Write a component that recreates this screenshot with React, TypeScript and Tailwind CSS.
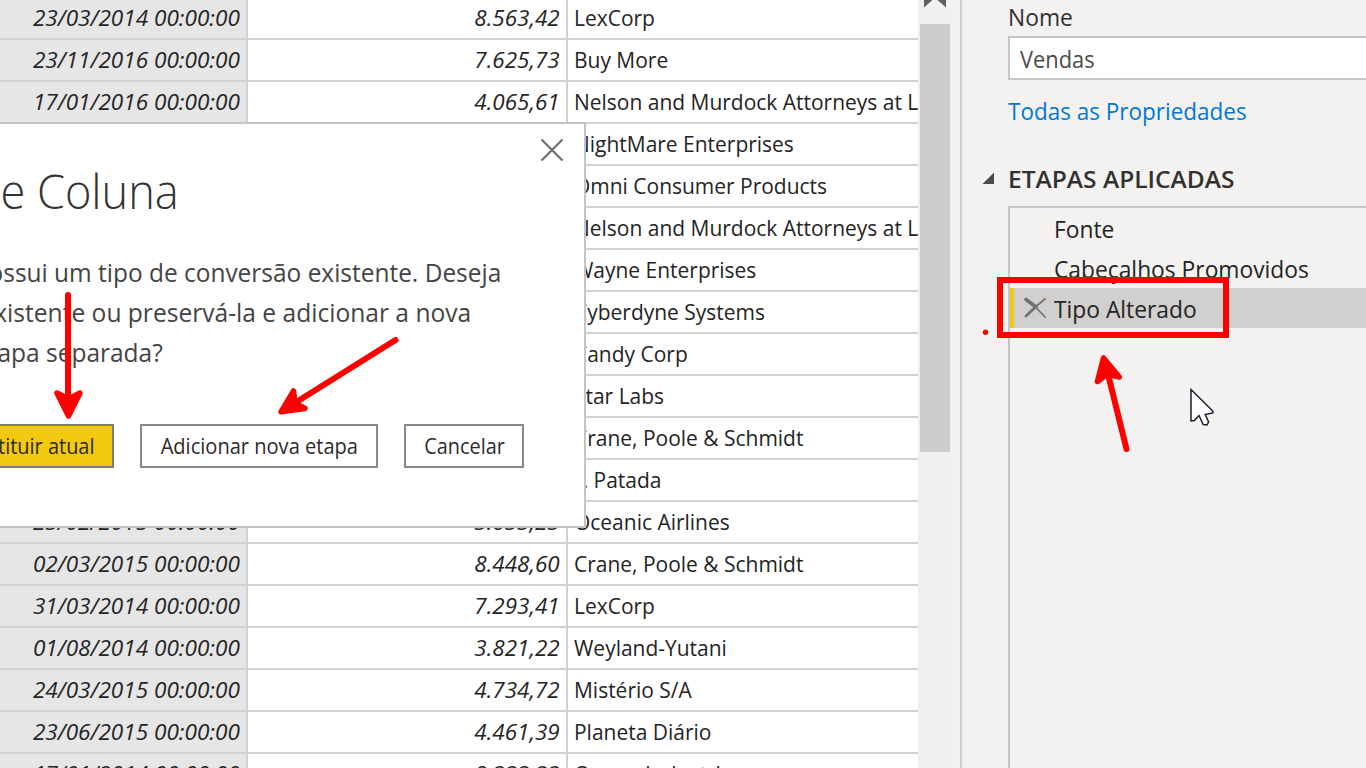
type Row = { date: string; value: string; client: string; nudge?: boolean };

const rows: Row[] = [
  { date: '23/03/2014 00:00:00', value: '8.563,42', client: 'LexCorp' },
  { date: '23/11/2016 00:00:00', value: '7.625,73', client: 'Buy More' },
  { date: '17/01/2016 00:00:00', value: '4.065,61', client: 'Nelson and Murdock Attorneys at L' },
  { date: '', value: '', client: 'NightMare Enterprises' },
  { date: '', value: '', client: 'Omni Consumer Products' },
  { date: '', value: '', client: 'Nelson and Murdock Attorneys at L' },
  { date: '', value: '', client: 'Wayne Enterprises' },
  { date: '', value: '', client: 'Cyberdyne Systems' },
  { date: '', value: '', client: 'Candy Corp' },
  { date: '', value: '', client: 'Star Labs' },
  { date: '', value: '', client: 'Crane, Poole & Schmidt' },
  { date: '', value: '', client: 'J. Patada', nudge: true },
  { date: '23/02/2015 00:00:00', value: '3.633,23', client: 'Oceanic Airlines' },
  { date: '02/03/2015 00:00:00', value: '8.448,60', client: 'Crane, Poole & Schmidt' },
  { date: '31/03/2014 00:00:00', value: '7.293,41', client: 'LexCorp' },
  { date: '01/08/2014 00:00:00', value: '3.821,22', client: 'Weyland-Yutani' },
  { date: '24/03/2015 00:00:00', value: '4.734,72', client: 'Mistério S/A' },
  { date: '23/06/2015 00:00:00', value: '4.461,39', client: 'Planeta Diário' },
  { date: '17/01/2014 00:00:00', value: '8.333,33', client: 'Queen Industries' },
];

function Grid() {
  return (
    <div className="-mt-0.5 w-[918px] shrink-0 overflow-hidden bg-white text-[22px] leading-[38px] text-[#242424]">
      {rows.map((r, i) => (
        <div key={i} className="flex h-[42px] whitespace-nowrap border-b-2 border-[#d2d2d2]">
          <div className="flex w-[248px] justify-end border-r-2 border-[#d2d2d2] bg-[#e6e6e6] pr-[6px] italic">
            <span className="origin-right scale-x-[1.025]">{r.date}</span>
          </div>
          <div className="flex w-[320px] justify-end border-r-2 border-[#d2d2d2] pr-[6px] italic">
            <span className="origin-right scale-x-[1.02]">{r.value}</span>
          </div>
          <div className={r.nudge ? 'flex min-w-0 flex-1 pl-[9px]' : 'flex min-w-0 flex-1 pl-[6px]'}>
            <span className="origin-left scale-x-[0.953]">{r.client}</span>
          </div>
        </div>
      ))}
    </div>
  );
}

function Scrollbar() {
  return (
    <div className="w-[33px] shrink-0 bg-[#f0f0f0]">
      <svg className="block" width="33" height="24" viewBox="918 0 33 24">
        <path d="M924 7.5V0H932.5L924 7.5ZM946 7.5V0H937.5L946 7.5Z" fill="#606060" />
      </svg>
      <div className="ml-0.5 h-[428px] w-[30px] bg-[#cdcdcd]" />
    </div>
  );
}

function Step({ label, selected }: { label: string; selected?: boolean }) {
  return (
    <div
      className={
        selected
          ? 'flex h-10 items-center border-l-4 border-[#f2c811] bg-[#d2d0ce] pl-2.5'
          : 'flex h-10 items-center pl-3.5'
      }
    >
      <span className="flex w-[30px] shrink-0">
        {selected && (
          <svg width="23" height="22" viewBox="0 0 23 22" fill="none" stroke="#737271" strokeLinecap="round">
            <path d="M2 2.5L12 10" strokeWidth="3.6" />
            <path d="M11 9.5L21 20" strokeWidth="1.8" />
            <path d="M21 2L10 11" strokeWidth="1.8" />
            <path d="M11 10.5L2 19" strokeWidth="2.8" />
          </svg>
        )}
      </span>
      <span className="origin-left scale-x-[0.95] whitespace-nowrap pt-0.5 text-[24px] text-[#252423]">{label}</span>
    </div>
  );
}

function SettingsPanel() {
  return (
    <aside className="flex min-w-0 flex-1 flex-col overflow-hidden border-l-2 border-[#d0cfce] pl-5 text-[24px] text-[#323130]">
      <div className="h-9 pl-[26px] leading-[34px]">
        <span className="inline-block origin-left scale-x-[0.95]">Nome</span>
      </div>
      <div className="ml-[26px] h-11 border-2 border-r-0 border-[#c8c6c4] bg-white pl-[10px] leading-[41px] text-[#4c4a48]">
        <span className="inline-block origin-left scale-x-[0.91]">Vendas</span>
      </div>
      <a className="ml-[26px] mt-[11px] block h-10 whitespace-nowrap leading-[40px] text-[#0078d4]">
        <span className="inline-block origin-left scale-x-[0.937]">Todas as Propriedades</span>
      </a>
      <div className="mt-[28px] flex h-10 items-center">
        <svg className="mr-[13px] shrink-0" width="13" height="12" viewBox="0 0 13 12">
          <path d="M0.5 11L12 -0.5V11Z" fill="#4a4a4a" />
        </svg>
        <h2 className="origin-left scale-x-[1.022] whitespace-nowrap font-semibold">ETAPAS APLICADAS</h2>
      </div>
      <div className="ml-[26px] mt-[7px] flex-1 border-l-2 border-t-2 border-[#c8c6c4]">
        <Step label="Fonte" />
        <Step label="Cabeçalhos Promovidos" />
        <Step label="Tipo Alterado" selected />
      </div>
    </aside>
  );
}

function Dialog() {
  return (
    <div className="absolute left-0 top-[122px] flex h-[406px] w-[586px] flex-col overflow-hidden border-y-2 border-r-2 border-[#c4c4c4] bg-white">
      <svg className="absolute left-[540px] top-[13px]" width="24" height="26" viewBox="0 0 24 26">
        <path d="M1.5 2.5L22.5 23.5M22.5 2.5L1.5 23.5" stroke="#6f6f6f" strokeWidth="2.2" fill="none" />
      </svg>
      <h1 className="mt-[37px] flex h-[60px] w-[179px] justify-end whitespace-nowrap text-[48px] font-light leading-[60px] text-[#333]">
        <span className="origin-right scale-x-[0.94]">e Coluna</span>
      </h1>
      <div className="mt-[31px] text-[25px] leading-[40px] text-[#444]">
        <p className="flex w-[501px] justify-end whitespace-nowrap">
          <span className="origin-right scale-x-[0.978]">ossui um tipo de conversão existente. Deseja</span>
        </p>
        <p className="flex w-[471px] justify-end whitespace-nowrap">
          <span className="origin-right scale-x-[0.983]">xistente ou preservá-la e adicionar a nova</span>
        </p>
        <p className="flex w-[163px] justify-end whitespace-nowrap">
          <span className="origin-right scale-x-[0.98]">apa separada?</span>
        </p>
      </div>
      <div className="mt-[52px] flex h-11 whitespace-nowrap text-[21px] leading-[41px] text-[#2b2b2b]">
        <button className="flex w-[114px] justify-end border-2 border-l-0 border-[#7d7b79] bg-[#f2c811] pr-[18px]">
          <span className="origin-right scale-x-[0.95]">tituir atual</span>
        </button>
        <button className="ml-[26px] flex w-[238px] justify-center border-2 border-[#8a8886]">
          <span className="scale-x-[0.955]">Adicionar nova etapa</span>
        </button>
        <button className="ml-[26px] flex w-[120px] justify-center border-2 border-[#8a8886] pl-px">
          <span className="scale-x-[0.945]">Cancelar</span>
        </button>
      </div>
    </div>
  );
}

function Annotations() {
  return (
    <svg className="pointer-events-none absolute inset-0" width="1366" height="768" viewBox="0 0 1366 768">
      <g stroke="#ff0000" strokeWidth="6" strokeLinecap="round" strokeLinejoin="round" fill="none">
        <path d="M68 295V405" />
        <path d="M68.5 416L57 393L68.5 399L80 393Z" fill="#ff0000" strokeWidth="5.5" />
        <path d="M395.5 340L290 406" />
        <path d="M281 411.8L293.5 391L295 403L305 408.5Z" fill="#ff0000" strokeWidth="5.5" />
        <path d="M1126.5 449L1107 370" />
        <path d="M1103.5 358L1097.5 381.5L1107 374L1119.3 377Z" fill="#ff0000" strokeWidth="5.5" />
        <rect x="1000" y="280" width="226" height="55" strokeLinejoin="miter" />
      </g>
      <circle cx="985.5" cy="332.3" r="2.7" fill="#ff0000" />
      <path
        d="M1191 389.5V421L1194.5 420.5L1199 415.5L1203.2 424.5L1207 425L1208.6 422L1205.3 414.5L1212.8 413V411Z"
        fill="#fff"
        stroke="#1e1c30"
        strokeWidth="1.5"
      />
    </svg>
  );
}

export default function App() {
  return (
    <div className="relative flex h-[768px] w-[1366px] overflow-hidden bg-[#f3f2f1] font-['Open_Sans',sans-serif]">
      <Grid />
      <Scrollbar />
      <div className="w-[9px] shrink-0" />
      <SettingsPanel />
      <Dialog />
      <Annotations />
    </div>
  );
}
